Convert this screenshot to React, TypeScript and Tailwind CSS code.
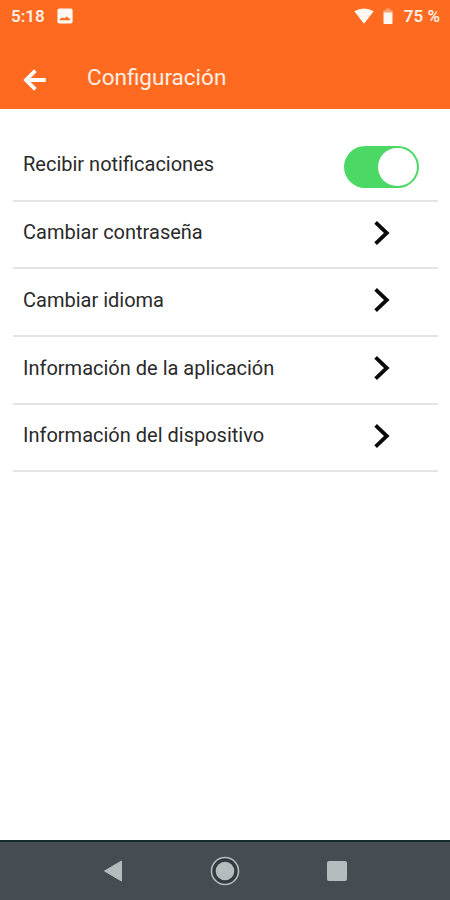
interface Setting {
  label: string;
  type: 'toggle' | 'link';
  rowClass: string;
}

const settings: Setting[] = [
  { label: 'Recibir notificaciones', type: 'toggle', rowClass: 'h-[93px] pt-[24px]' },
  { label: 'Cambiar contraseña', type: 'link', rowClass: 'h-[67px]' },
  { label: 'Cambiar idioma', type: 'link', rowClass: 'h-[68px]' },
  { label: 'Información de la aplicación', type: 'link', rowClass: 'h-[68px]' },
  { label: 'Información del dispositivo', type: 'link', rowClass: 'h-[67px]' },
];

function StatusBar() {
  return (
    <div className="flex h-8 items-center justify-between pt-px pr-[10px] pl-[11px] text-[17px] font-semibold">
      <div className="flex items-center gap-[12px]">
        <span>5:18</span>
        <svg className="mb-px" width="16" height="16" viewBox="0 0 16 16">
          <rect x="0.4" y="0.4" width="15.2" height="15.2" rx="2" fill="#fff8f2" />
          <path d="M2.8 12.2V11L5.6 9.6L7.2 10.6L9.8 8.4L13.2 11.4V12.2Z" fill="#ff6a21" />
        </svg>
      </div>
      <div className="flex items-center">
        <svg className="mr-[9px] mb-[2px]" width="20" height="16" viewBox="0 0 20 16">
          <path d="M0.3 3.2Q10 -2 19.7 3.2L10 15.8Z" fill="#fff8f2" />
        </svg>
        <svg className="mr-[11px] mb-[2px]" width="10" height="16" viewBox="0 0 10 16">
          <path d="M0.5 5V2.2H2.8V0.5H7.2V2.2H9.5V5Z" fill="#ffa270" />
          <path d="M0.5 4.5H9.5V15Q9.5 16 8.5 16H1.5Q0.5 16 0.5 15Z" fill="#fff8f2" />
        </svg>
        <span>75 %</span>
      </div>
    </div>
  );
}

function Header() {
  return (
    <header className="h-[109px] bg-[#ff6a21] text-[#ffeee4]">
      <StatusBar />
      <div className="flex h-[77px] items-center pb-[1px] pl-[23px]">
        <button type="button" aria-label="Volver" className="mt-[19px]">
          <svg width="24" height="24" viewBox="0 0 24 24" fill="none" stroke="#ffffff" strokeWidth="3.8">
            <path d="M22.7 12H3M12.4 2.6L3 12L12.4 21.4" />
          </svg>
        </button>
        <h1 className="mt-[14px] ml-[40px] text-[22.5px] leading-7">Configuración</h1>
      </div>
    </header>
  );
}

function Toggle() {
  return (
    <div className="mr-[19px] flex h-[42px] w-[75px] items-center justify-end rounded-full bg-[#4bd865] pr-[2px]">
      <div className="h-[38px] w-[39px] rounded-full bg-white" />
    </div>
  );
}

function Chevron() {
  return (
    <svg
      className="mr-[47px] mb-[4px]"
      width="18"
      height="26"
      viewBox="0 0 18 26"
      fill="none"
      stroke="#0a0a0a"
      strokeWidth="3.8"
    >
      <path d="M2.6 2.4L13.8 13L2.6 23.6" />
    </svg>
  );
}

function SettingRow({ label, type, rowClass }: Setting) {
  return (
    <li className={`flex items-center justify-between border-b-2 border-[#e5e5e5] pl-[10px] ${rowClass}`}>
      <span className="pb-[5px] text-[20px] leading-6 text-[#2a2a2a]">{label}</span>
      {type === 'toggle' ? <Toggle /> : <Chevron />}
    </li>
  );
}

function NavigationBar() {
  return (
    <nav className="grid h-[60px] grid-cols-[112px_1fr_112px] items-center border-t-2 border-[#142d30] bg-[#464d52] px-[57px]">
      <svg className="mx-auto" width="20" height="22" viewBox="0 0 20 22">
        <path d="M1.5 11L18.5 1V21Z" fill="#b4bcbe" stroke="#b4bcbe" strokeLinejoin="round" />
      </svg>
      <svg className="mx-auto" width="30" height="30" viewBox="0 0 30 30">
        <circle cx="15" cy="15" r="13.5" fill="#343b3f" stroke="#b4bcbe" strokeWidth="1.6" />
        <circle cx="15" cy="15" r="9.3" fill="#b4bcbe" />
      </svg>
      <div className="mx-auto h-5 w-5 rounded-[2px] bg-[#b4bcbe]" />
    </nav>
  );
}

export default function App() {
  return (
    <div className="flex h-[900px] w-[450px] flex-col bg-white font-['Roboto',sans-serif]">
      <Header />
      <main className="flex-1 pr-3 pl-[13px]">
        <ul>
          {settings.map((setting) => (
            <SettingRow key={setting.label} {...setting} />
          ))}
        </ul>
      </main>
      <NavigationBar />
    </div>
  );
}
